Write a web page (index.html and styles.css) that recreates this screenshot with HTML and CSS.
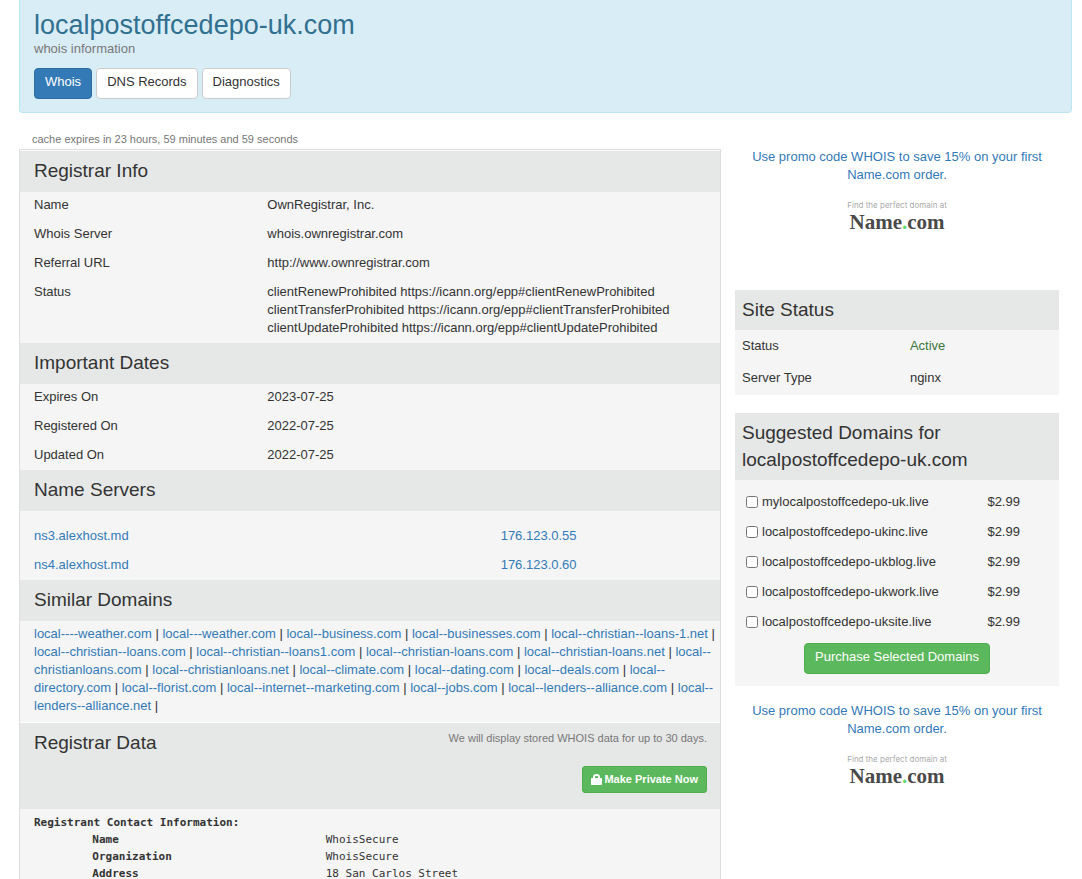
FILE: index.html
```
<!DOCTYPE html>
<html lang="en">
<head>
    <meta charset="UTF-8">
    <meta name="viewport" content="width=device-width, initial-scale=1">
    <title>localpostoffcedepo-uk.com whois</title>
    <link rel="stylesheet" href="styles.css">
</head>
<body>
    <header class="domain-header">
        <h1>localpostoffcedepo-uk.com</h1>
        <p class="subtitle">whois information</p>
        <nav class="tabs">
            <a class="btn btn-primary" href="#whois">Whois</a>
            <a class="btn" href="#dns">DNS Records</a>
            <a class="btn" href="#diagnostics">Diagnostics</a>
        </nav>
    </header>

    <div class="columns">
        <main class="whois" id="whois">
            <p class="cache">cache expires in 23 hours, 59 minutes and 59 seconds</p>

            <div class="panel">
                <h2>Registrar Info</h2>
                <dl class="rows">
                    <div><dt>Name</dt><dd>OwnRegistrar, Inc.</dd></div>
                    <div><dt>Whois Server</dt><dd>whois.ownregistrar.com</dd></div>
                    <div><dt>Referral URL</dt><dd>http://www.ownregistrar.com</dd></div>
                    <div>
                        <dt>Status</dt>
                        <dd>clientRenewProhibited https://icann.org/epp#clientRenewProhibited<br>
                            clientTransferProhibited https://icann.org/epp#clientTransferProhibited<br>
                            clientUpdateProhibited https://icann.org/epp#clientUpdateProhibited</dd>
                    </div>
                </dl>

                <h2>Important Dates</h2>
                <dl class="rows">
                    <div><dt>Expires On</dt><dd>2023-07-25</dd></div>
                    <div><dt>Registered On</dt><dd>2022-07-25</dd></div>
                    <div><dt>Updated On</dt><dd>2022-07-25</dd></div>
                </dl>

                <h2>Name Servers</h2>
                <dl class="rows servers">
                    <div><dt><a href="#">ns3.alexhost.md</a></dt><dd><a href="#">176.123.0.55</a></dd></div>
                    <div><dt><a href="#">ns4.alexhost.md</a></dt><dd><a href="#">176.123.0.60</a></dd></div>
                </dl>

                <h2>Similar Domains</h2>
                <p class="similar">
                    <a href="#">local----weather.com</a> |
                    <a href="#">local---weather.com</a> |
                    <a href="#">local--business.com</a> |
                    <a href="#">local--businesses.com</a> |
                    <a href="#">local--christian--loans-1.net</a> |<br>
                    <a href="#">local--christian--loans.com</a> |
                    <a href="#">local--christian--loans1.com</a> |
                    <a href="#">local--christian-loans.com</a> |
                    <a href="#">local--christian-loans.net</a> |
                    <a href="#">local--<br>christianloans.com</a> |
                    <a href="#">local--christianloans.net</a> |
                    <a href="#">local--climate.com</a> |
                    <a href="#">local--dating.com</a> |
                    <a href="#">local--deals.com</a> |
                    <a href="#">local--<br>directory.com</a> |
                    <a href="#">local--florist.com</a> |
                    <a href="#">local--internet--marketing.com</a> |
                    <a href="#">local--jobs.com</a> |
                    <a href="#">local--lenders--alliance.com</a> |
                    <a href="#">local--<br>lenders--alliance.net</a> |
                </p>

                <div class="data-head">
                    <h2>Registrar Data</h2>
                    <div class="data-actions">
                        <small>We will display stored WHOIS data for up to 30 days.</small>
                        <button type="button" class="btn btn-success btn-small">
                            <svg class="lock" viewBox="0 0 11 11" aria-hidden="true">
                                <path fill="currentColor" fill-rule="evenodd" d="M2 4V3C2 1.200 3.200 0 5.500 0S9 1.200 9 3v1h1.500c.3 0 .5.200.5.500v6c0 .3-.2.500-.5.500h-10c-.3 0-.5-.2-.5-.5v-6C0 4.200.2 4 .5 4zM4 4h3V3C7 2.300 6.500 2 5.500 2S4 2.300 4 3z"/>
                            </svg>
                            Make Private Now
                        </button>
                    </div>
                </div>

                <div class="raw">
                    <strong>Registrant Contact Information:</strong>
                    <dl>
                        <div><dt>Name</dt><dd>WhoisSecure</dd></div>
                        <div><dt>Organization</dt><dd>WhoisSecure</dd></div>
                        <div><dt>Address</dt><dd>18 San Carlos Street</dd></div>
                    </dl>
                </div>
            </div>
        </main>

        <aside class="sidebar">
            <a class="promo" href="#">
                <span>Use promo code WHOIS to save 15% on your first Name.com order.</span>
                <span class="logo-tag">Find the perfect domain at</span>
                <span class="logo-name">Name<i>.</i>com</span>
            </a>

            <section class="box">
                <h2>Site Status</h2>
                <dl class="site-status">
                    <div><dt>Status</dt><dd class="active">Active</dd></div>
                    <div><dt>Server Type</dt><dd>nginx</dd></div>
                </dl>
            </section>

            <section class="box">
                <h2>Suggested Domains for localpostoffcedepo-uk.com</h2>
                <form class="suggested">
                    <div class="offer"><label><input type="checkbox" name="d1"> mylocalpostoffcedepo-uk.live</label><span>$2.99</span></div>
                    <div class="offer"><label><input type="checkbox" name="d2"> localpostoffcedepo-ukinc.live</label><span>$2.99</span></div>
                    <div class="offer"><label><input type="checkbox" name="d3"> localpostoffcedepo-ukblog.live</label><span>$2.99</span></div>
                    <div class="offer"><label><input type="checkbox" name="d4"> localpostoffcedepo-ukwork.live</label><span>$2.99</span></div>
                    <div class="offer"><label><input type="checkbox" name="d5"> localpostoffcedepo-uksite.live</label><span>$2.99</span></div>
                    <button type="submit" class="btn btn-success">Purchase Selected Domains</button>
                </form>
            </section>

            <a class="promo" href="#">
                <span>Use promo code WHOIS to save 15% on your first Name.com order.</span>
                <span class="logo-tag">Find the perfect domain at</span>
                <span class="logo-name">Name<i>.</i>com</span>
            </a>
        </aside>
    </div>
</body>
</html>
```
FILE: styles.css
```
* {
    box-sizing: border-box;
}

body {
    margin: 0;
    padding: 0 10px 0 19px;
    min-height: 100vh;
    display: flex;
    flex-direction: column;
    background: #fff;
    color: #333;
    font-family: "Liberation Sans", Arial, sans-serif;
    font-size: 13px;
    line-height: 18px;
}

h1, h2, p, dl, dd {
    margin: 0;
}

a {
    color: #337ab7;
    text-decoration: none;
}

/* header */
.domain-header {
    padding: 10px 14px 13px;
    background: #d9edf7;
    border: 1px solid #bce8f1;
    border-top: 0;
    border-radius: 0 0 4px 4px;
}

h1 {
    color: #31708f;
    font-size: 27px;
    font-weight: normal;
    line-height: 30px;
}

.subtitle {
    color: #777;
}

.tabs {
    display: flex;
    gap: 4px;
    margin-top: 10px;
}

.btn {
    padding: 4px 10px 7px;
    border: 1px solid #ccc;
    border-radius: 4px;
    background: #fff;
    color: #333;
    font: inherit;
    cursor: pointer;
}

.btn-primary {
    background: #337ab7;
    border-color: #2e6da4;
    color: #fff;
}

.btn-success {
    background: #5cb85c;
    border-color: #4cae4c;
    color: #fff;
}

.btn-small {
    display: flex;
    align-items: center;
    gap: 2px;
    padding: 4px 8px 5px;
    border-radius: 3px;
    font-size: 11px;
    line-height: 16px;
    font-weight: bold;
}

.lock {
    width: 11px;
    height: 11px;
}

/* layout */
.columns {
    flex: 1;
    display: grid;
    grid-template-columns: minmax(0, 13fr) minmax(0, 6fr);
    gap: 14px;
    padding-right: 13px;
}

.whois {
    display: flex;
    flex-direction: column;
    padding-top: 17px;
}

.cache {
    padding: 0 13px 1px;
    color: #777;
    font-size: 11px;
}

.panel {
    flex: 1;
    border: 1px solid #ddd;
    border-bottom: 0;
    padding-top: 1px;
    background: #f5f5f5;
    background-clip: content-box;
}

h2 {
    padding: 6px 14px 8px;
    background: #e6e8e7;
    font-size: 19px;
    font-weight: normal;
    line-height: 27px;
}

/* label and value rows */
.rows {
    display: grid;
    gap: 1px;
}

.rows > div {
    display: grid;
    grid-template-columns: 1fr 2fr;
}

.rows dt,
.rows dd {
    padding: 4px 14px 6px;
}

.servers {
    padding-top: 12px;
}

.servers > div {
    grid-template-columns: 2fr 1fr;
}

.similar {
    padding: 4px 0 7px 14px;
    border-bottom: 1px solid #fff;
}

.data-head {
    display: flex;
    justify-content: space-between;
    padding: 0 13px 16px 0;
    background: #e6e8e7;
}

.data-actions {
    display: flex;
    flex-direction: column;
    align-items: flex-end;
    gap: 19px;
    padding-top: 6px;
}

.data-actions small {
    color: #777;
    font-size: 11px;
}

.raw {
    padding: 5px 0 7px;
    font-family: Consolas, "DejaVu Sans Mono", monospace;
    font-size: 11px;
    line-height: 17px;
}

.raw strong {
    padding: 0 14px;
}

.raw dl > div {
    display: grid;
    grid-template-columns: 4fr 7fr;
    margin-left: 8.333%;
}

.raw dt,
.raw dd {
    padding: 0 14px;
}

.raw dt {
    font-weight: bold;
}

/* sidebar */
.sidebar {
    padding-top: 35px;
}

.promo {
    display: flex;
    flex-direction: column;
    align-items: center;
    padding: 0 10px 58px;
    text-align: center;
}

.logo-tag {
    margin-top: 13px;
    color: #aaa;
    font-family: Inter, sans-serif;
    font-size: 8px;
    line-height: 16px;
}

.logo-name {
    color: #4a4a4a;
    font-family: "Liberation Serif", Georgia, serif;
    font-size: 21px;
    font-weight: bold;
    line-height: 19px;
}

.logo-name i {
    color: #5fdc6c;
    font-style: normal;
}

.box {
    margin-bottom: 18px;
    background: #f5f5f5;
}

.box:last-of-type {
    margin-bottom: 16px;
}

.box h2 {
    padding: 6px 7px 7px;
}

.site-status > div {
    display: grid;
    grid-template-columns: 13fr 11fr;
    padding: 7px 7px 7px;
}

.site-status {
    padding-bottom: 1px;
}

.active {
    color: #3c763d;
}

.suggested {
    padding: 7px 7px 12px;
    text-align: center;
}

.offer {
    display: grid;
    grid-template-columns: 19fr 5fr;
    align-items: center;
    height: 30px;
    text-align: left;
}

.offer label {
    display: flex;
    align-items: center;
    gap: 4px;
}

.offer input {
    width: 12px;
    height: 12px;
    margin: 0 0 0 4px;
}

.suggested .btn {
    margin-top: 6px;
}
```
